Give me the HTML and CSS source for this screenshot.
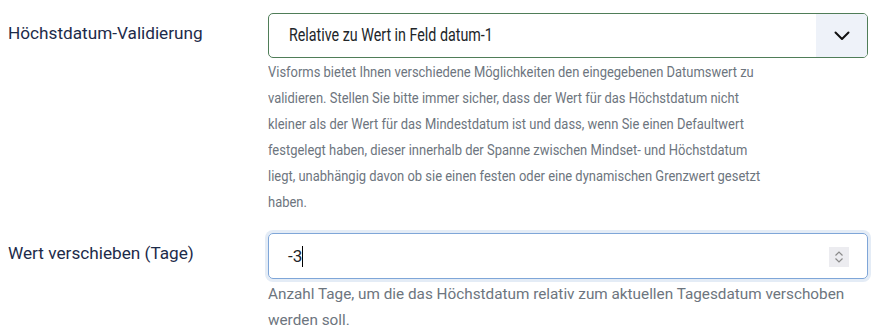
FILE: index.html
```html
<!DOCTYPE html>
<html>
<head>
<meta charset="utf-8">
<title>Visforms Feld</title>
<link rel="stylesheet" href="styles.css">
</head>
<body>
<div class="form">
    <div class="control-group">
        <div class="control-label"><label>Höchstdatum-Validierung</label></div>
        <div class="controls">
            <div class="form-select valid">
                <span class="select-value"><span class="select-text">Relative zu Wert in Feld datum-1</span></span>
                <span class="select-arrow">
                    <svg width="16" height="10" viewBox="0 0 16 10"><path d="M1.5 1.5 L8 8 L14.5 1.5" fill="none" stroke="#111" stroke-width="2" stroke-linecap="round" stroke-linejoin="round"/></svg>
                </span>
            </div>
            <div class="form-text narrow">Visforms bietet Ihnen verschiedene Möglichkeiten den eingegebenen Datumswert zu validieren. Stellen Sie bitte immer sicher, dass der Wert für das Höchstdatum nicht kleiner als der Wert für das Mindestdatum ist und dass, wenn Sie einen Defaultwert festgelegt haben, dieser innerhalb der Spanne zwischen Mindset- und Höchstdatum liegt, unabhängig davon ob sie einen festen oder eine dynamischen Grenzwert gesetzt haben.</div>
        </div>
    </div>
    <div class="control-group">
        <div class="control-label"><label>Wert verschieben (Tage)</label></div>
        <div class="controls">
            <div class="form-control focus">
                <span class="value">-3</span><span class="caret"></span>
                <span class="spinner">
                    <svg width="20" height="20" viewBox="0 0 20 20"><path d="M6.5 8.5 L10 5 L13.5 8.5 M6.5 11.5 L10 15 L13.5 11.5" fill="none" stroke="#8a8a8a" stroke-width="1.2"/></svg>
                </span>
            </div>
            <div class="form-text wide">Anzahl Tage, um die das Höchstdatum relativ zum aktuellen Tagesdatum verschoben werden soll.</div>
        </div>
    </div>
</div>
</body>
</html>
```

FILE: styles.css
```css
*{margin:0;padding:0;box-sizing:border-box;}
body{background:#fff;font-family:Roboto,"Liberation Sans",sans-serif;}
.form{padding:13px 13px 0 8px;}
.control-group{display:flex;margin-bottom:17px;}
.control-label{width:260px;flex:none;padding-top:8px;font-size:17.2px;line-height:24px;color:#1d2b4a;}
.controls{width:600px;}
.form-select{display:flex;height:45px;border:1px solid #4f7d58;border-radius:5px;overflow:hidden;}
.form-select .select-value{flex:1;padding-left:20px;font-size:17.5px;line-height:43px;color:#22262a;}
.form-select .select-text{display:inline-block;transform:scaleX(0.816);transform-origin:left center;}
.form-select .select-arrow{width:51px;background:#eef2f9;display:flex;align-items:center;justify-content:center;}
.form-text{margin-top:2px;font-size:14px;line-height:26px;color:#6d757e;}
.form-text.narrow{width:560px;font-size:14.5px;transform:scaleX(0.893);transform-origin:left top;}
.form-text.wide{font-size:15.3px;}
.form-control{position:relative;display:flex;align-items:center;height:46px;padding-left:19px;border:1px solid #7fa6d8;border-radius:5px;box-shadow:0 0 0 3px #e4ecf6;font-size:17px;color:#22262a;}
.form-control .caret{display:inline-block;width:1px;height:21px;background:#000;margin-left:0;}
.form-control .spinner{position:absolute;right:18px;top:13px;width:20px;height:20px;background:#ececf0;}
.form-control .spinner svg{display:block;}
```
